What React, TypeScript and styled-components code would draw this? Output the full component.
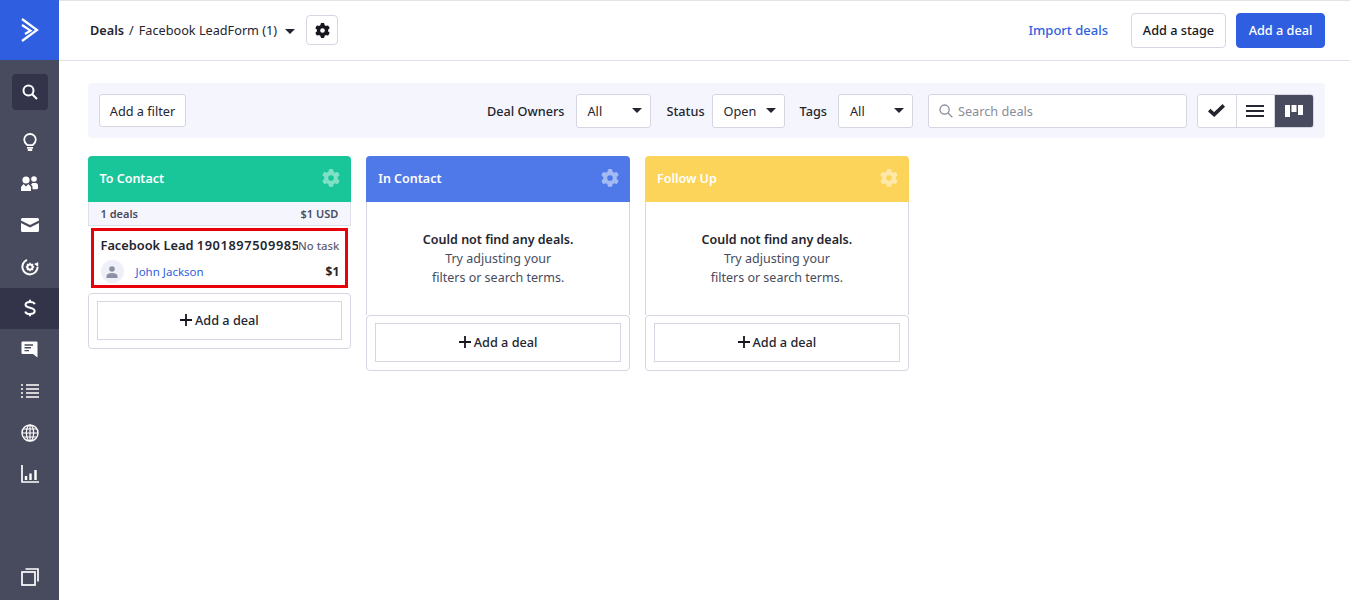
import styled, { createGlobalStyle } from 'styled-components'
import { FaGear } from 'react-icons/fa6'

const stages = [
  { name: 'To Contact', color: '#19c69a', gear: '#7fe0c6' },
  { name: 'In Contact', color: '#4f78e8', gear: '#a3baf2' },
  { name: 'Follow Up', color: '#fdd45a', gear: '#fee9ab' },
]

const LogoIcon = () => (
  <svg width="18" height="24" viewBox="0 0 18 24" fill="none" stroke="#fff" strokeWidth="2.2">
    <path d="M1 1 L16 12 L1 23" />
    <path d="M1 7 L9.5 12.6 L4 16" />
  </svg>
)
const SearchIcon = () => (
  <svg width="16" height="16" viewBox="0 0 16 16" fill="none" stroke="#fff" strokeWidth="2">
    <circle cx="6.5" cy="6.5" r="5" />
    <path d="M10.2 10.2 L15 15" />
  </svg>
)
const BulbIcon = () => (
  <svg width="14" height="18" viewBox="0 0 14 18" fill="none" stroke="#fff" strokeWidth="1.8">
    <path d="M4.5 12.2 C3 10.8 1.2 9.5 1.2 6.8 a5.8 5.8 0 0 1 11.6 0 C12.8 9.5 11 10.8 9.5 12.2 Z" />
    <path d="M4 14.8 H10 M4.8 17 H9.2" />
  </svg>
)
const ContactsIcon = () => (
  <svg width="17" height="15" viewBox="0 0 17 15" fill="#fff">
    <circle cx="5" cy="4" r="3.6" />
    <path d="M0 15 V11 L2.6 8 L5 10.6 L7.4 8 L10 11 V15 Z" />
    <circle cx="13" cy="3" r="2.8" />
    <path d="M11.5 7 H15 Q17 7 17 9.5 V12.2 Q17 13.2 15.5 13.2 H11.5 V10.5 L10 8.5 Z" />
  </svg>
)
const MailIcon = () => (
  <svg width="18" height="14" viewBox="0 0 18 14" fill="#fff">
    <path d="M1.5 0 H16.5 A1.5 1.5 0 0 1 18 1.5 V2.5 L9 7 L0 2.5 V1.5 A1.5 1.5 0 0 1 1.5 0 Z" />
    <path d="M0 5 L9 9.5 L18 5 V12.5 A1.5 1.5 0 0 1 16.5 14 H1.5 A1.5 1.5 0 0 1 0 12.5 Z" />
  </svg>
)
const AutomationIcon = () => (
  <svg width="18" height="18" viewBox="0 0 18 18" fill="none" stroke="#fff">
    <path d="M6 1.8 A7.6 7.6 0 1 0 16.6 9" strokeWidth="2" />
    <path d="M13.5 6 L17 4.5 L17 8.5 Z" fill="#fff" strokeWidth="0.5" />
    <circle cx="9" cy="9" r="2.6" strokeWidth="2" />
    <path d="M9 4.8 V6 M9 12 V13.2 M4.8 9 H6 M12 9 H13.2 M6 6 L6.9 6.9 M11.1 11.1 L12 12 M12 6 L11.1 6.9 M6.9 11.1 L6 12" strokeWidth="1.5" />
  </svg>
)
const DollarIcon = () => (
  <svg width="12" height="18" viewBox="0 0 14 20" fill="none" stroke="#fff" strokeWidth="2.4">
    <path d="M12.5 5.5 C12 3.5 10 3 7 3 C4 3 1.8 4 1.8 6.2 C1.8 11 12.4 8.5 12.4 13.6 C12.4 16 10 17 7 17 C4 17 2 16.2 1.5 14" />
    <path d="M7 0.5 V3 M7 17 V19.5" />
  </svg>
)
const ChatIcon = () => (
  <svg width="17" height="17" viewBox="0 0 17 17">
    <path d="M1.5 0.5 H15.5 A1 1 0 0 1 16.5 1.5 V16.5 L12 13 H1.5 A1 1 0 0 1 0.5 12 V1.5 A1 1 0 0 1 1.5 0.5 Z" fill="#fff" />
    <path d="M3.5 4 H12 M3.5 6.8 H10 M3.5 9.6 H8" stroke="#484b5e" strokeWidth="1.4" />
  </svg>
)
const ListIcon = () => (
  <svg width="18" height="14" viewBox="0 0 18 14" stroke="#fff" strokeWidth="1.6">
    <path d="M5 1 H18 M5 5 H18 M5 9 H18 M5 13 H18" />
    <path d="M0 1 H2 M0 5 H2 M0 9 H2 M0 13 H2" />
  </svg>
)
const GlobeIcon = () => (
  <svg width="18" height="18" viewBox="0 0 18 18" fill="none" stroke="#fff" strokeWidth="1.2">
    <circle cx="9" cy="9" r="8" strokeWidth="1.4" />
    <ellipse cx="9" cy="9" rx="3.6" ry="8" />
    <path d="M1 9 H17 M2.2 5 H15.8 M2.2 13 H15.8 M9 1 V17" />
  </svg>
)
const ChartIcon = () => (
  <svg width="18" height="18" viewBox="0 0 18 18" fill="none" stroke="#fff">
    <path d="M1 0 V17 H18" strokeWidth="1.7" />
    <path d="M5 15 V11 M9.5 15 V8.5 M14.5 15 V5" strokeWidth="2.4" />
  </svg>
)
const PagesIcon = () => (
  <svg width="18" height="18" viewBox="0 0 18 18" fill="none" stroke="#fff" strokeWidth="1.7">
    <rect x="1" y="4" width="13" height="13" />
    <path d="M4.5 1 H17 V13.5" />
  </svg>
)
const Caret = () => (
  <svg width="10" height="5" viewBox="0 0 10 5" fill="#24252f">
    <path d="M0 0 H10 L5 5 Z" />
  </svg>
)
const CheckIcon = () => (
  <svg width="17" height="13" viewBox="0 0 17 13" fill="none" stroke="#24252f" strokeWidth="3.6">
    <path d="M1.2 6.2 L6.2 10.6 L15.8 1.4" />
  </svg>
)
const ListViewIcon = () => (
  <svg width="18" height="12" viewBox="0 0 18 12" stroke="#24252f" strokeWidth="2">
    <path d="M0 1 H18 M0 6 H18 M0 11 H18" />
  </svg>
)
const BoardViewIcon = () => (
  <svg width="18" height="12" viewBox="0 0 18 12" fill="#fff">
    <rect x="0" y="0" width="5" height="12" />
    <rect x="6.5" y="0" width="5" height="7" />
    <rect x="13" y="0" width="5" height="10" />
  </svg>
)
const InputSearchIcon = () => (
  <svg width="14" height="14" viewBox="0 0 14 14" fill="none" stroke="#8a8c99" strokeWidth="1.3">
    <circle cx="5.6" cy="5.6" r="4.6" />
    <path d="M9 9 L13.4 13.4" />
  </svg>
)
const PersonIcon = () => (
  <svg width="12" height="12" viewBox="0 0 12 12" fill="#8d90a3">
    <circle cx="6" cy="3" r="2.8" />
    <path d="M0.5 12 V10 C0.5 8 3 7 6 7 C9 7 11.5 8 11.5 10 V12 Z" />
  </svg>
)
const PlusIcon = () => (
  <svg width="12" height="12" viewBox="0 0 12 12" stroke="#17181f" strokeWidth="1.8">
    <path d="M6 0 V12 M0 6 H12" />
  </svg>
)

function App() {
  return (
    <Page>
      <GlobalStyle />
      <Sidebar>
        <Logo><LogoIcon /></Logo>
        <SearchSlot><SearchBox><SearchIcon /></SearchBox></SearchSlot>
        <NavItem><BulbIcon /></NavItem>
        <NavItem><ContactsIcon /></NavItem>
        <NavItem><MailIcon /></NavItem>
        <NavItem><AutomationIcon /></NavItem>
        <NavItem $active><DollarIcon /></NavItem>
        <NavItem><ChatIcon /></NavItem>
        <NavItem><ListIcon /></NavItem>
        <NavItem><GlobeIcon /></NavItem>
        <NavItem><ChartIcon /></NavItem>
        <NavBottom><PagesIcon /></NavBottom>
      </Sidebar>
      <Main>
        <Header>
          <Crumbs>
            <b>Deals</b>
            <Slash>/</Slash>
            <span>Facebook LeadForm (1)</span>
            <CaretWrap><Caret /></CaretWrap>
          </Crumbs>
          <GearButton><FaGear size={15} color="#17181f" /></GearButton>
          <HeaderRight>
            <ImportLink>Import deals</ImportLink>
            <StageButton>Add a stage</StageButton>
            <PrimaryButton>Add a deal</PrimaryButton>
          </HeaderRight>
        </Header>
        <Content>
          <FilterBar>
            <FilterButton>Add a filter</FilterButton>
            <FilterRight>
              <FilterLabel>Deal Owners</FilterLabel>
              <Select $w={75}>All<Caret /></Select>
              <FilterLabel $left={16} $right={7}>Status</FilterLabel>
              <Select $w={73}>Open<Caret /></Select>
              <FilterLabel $left={15}>Tags</FilterLabel>
              <Select $w={75}>All<Caret /></Select>
              <SearchInput><InputSearchIcon /><span>Search deals</span></SearchInput>
              <ViewGroup>
                <ViewButton $w={37.5}><CheckIcon /></ViewButton>
                <ViewButton $w={38.5}><ListViewIcon /></ViewButton>
                <ViewButton $w={39} $active><BoardViewIcon /></ViewButton>
              </ViewGroup>
            </FilterRight>
          </FilterBar>
          <Board>
            {stages.map((stage, i) => (
              <Column key={stage.name}>
                <StageHeader $color={stage.color}>
                  <span>{stage.name}</span>
                  <FaGear size={18} color={stage.gear} />
                </StageHeader>
                {i === 0 ? (
                  <>
                    <Summary><span>1 deals</span><span>$1 USD</span></Summary>
                    <Card>
                      <CardTop>
                        <DealTitle>Facebook Lead <Digits>1901897509985975</Digits></DealTitle>
                        <TaskLabel>No task</TaskLabel>
                      </CardTop>
                      <CardBottom>
                        <Avatar><PersonIcon /></Avatar>
                        <ContactName>John Jackson</ContactName>
                        <DealValue>$1</DealValue>
                      </CardBottom>
                    </Card>
                  </>
                ) : (
                  <Empty>
                    <b>Could not find any deals.</b>
                    <span>Try adjusting your</span>
                    <span>filters or search terms.</span>
                  </Empty>
                )}
                <AddArea>
                  <AddButton><PlusIcon />Add a deal</AddButton>
                </AddArea>
              </Column>
            ))}
          </Board>
        </Content>
      </Main>
    </Page>
  )
}

const GlobalStyle = createGlobalStyle`
  html, body { margin: 0; padding: 0; background: #fff; }
  * { box-sizing: border-box; }
  body { font-family: "Noto Sans", "Open Sans", sans-serif; color: #17181f; }
`
const Page = styled.div`
  display: flex;
  width: 1350px;
  height: 600px;
  overflow: hidden;
  font-size: 12.7px;
`
const Sidebar = styled.nav`
  width: 59px;
  flex: none;
  background: #484b5e;
  display: flex;
  flex-direction: column;
`
const Logo = styled.div`
  height: 60px;
  background: #2f5fe0;
  display: flex;
  align-items: center;
  justify-content: center;
`
const SearchSlot = styled.div`
  height: 61.5px;
  padding-top: 14px;
  display: flex;
  align-items: flex-start;
  justify-content: center;
`
const SearchBox = styled.div`
  width: 36px;
  height: 36px;
  border-radius: 4px;
  background: #33344a;
  display: flex;
  align-items: center;
  justify-content: center;
`
const NavItem = styled.div<{ $active?: boolean }>`
  height: 41.5px;
  flex: none;
  display: flex;
  align-items: center;
  justify-content: center;
  background: ${p => (p.$active ? '#33344a' : 'transparent')};
`
const NavBottom = styled(NavItem)`
  margin-top: auto;
  margin-bottom: 2px;
`
const Main = styled.div`
  flex: 1;
  min-width: 0;
  display: flex;
  flex-direction: column;
`
const Header = styled.header`
  height: 61px;
  flex: none;
  display: flex;
  align-items: center;
  padding: 0 25px 1px 31px;
  border-top: 1px solid #e3e3e6;
  border-bottom: 1px solid #dfe0ea;
`
const Crumbs = styled.div`
  display: flex;
  align-items: center;
  color: #24252f;
  b { font-weight: 600; }
`
const Slash = styled.span`
  margin: 0 5px;
`
const CaretWrap = styled.span`
  display: flex;
  margin-left: 8px;
  padding-top: 2px;
`
const GearButton = styled.div`
  width: 32px;
  height: 30px;
  margin-left: 11px;
  border: 1px solid #d5d6e2;
  border-radius: 4px;
  display: flex;
  align-items: center;
  justify-content: center;
`
const HeaderRight = styled.div`
  margin-left: auto;
  display: flex;
  align-items: center;
`
const ImportLink = styled.span`
  color: #2f5fe0;
  font-size: 13px;
  font-weight: 500;
  margin-right: 23px;
`
const StageButton = styled.div`
  width: 95px;
  height: 35px;
  border: 1px solid #d5d6e2;
  border-radius: 4px;
  font-weight: 500;
  display: flex;
  align-items: center;
  justify-content: center;
`
const PrimaryButton = styled(StageButton)`
  width: 89px;
  margin-left: 10px;
  background: #2f5fe0;
  border-color: #2f5fe0;
  color: #fff;
`
const Content = styled.main`
  flex: 1;
  padding: 22px 25px 0 28.5px;
`
const FilterBar = styled.div`
  height: 55px;
  padding: 0 11px 0 11.5px;
  background: #f5f6fd;
  border-radius: 4px;
  display: flex;
  align-items: center;
  justify-content: space-between;
`
const FilterButton = styled.div`
  width: 87px;
  height: 33px;
  background: #fff;
  border: 1px solid #d5d6e2;
  border-radius: 3px;
  color: #24252f;
  display: flex;
  align-items: center;
  justify-content: center;
`
const FilterRight = styled.div`
  display: flex;
  align-items: center;
`
const FilterLabel = styled.span<{ $left?: number; $right?: number }>`
  margin-left: ${p => p.$left ?? 0}px;
  margin-right: ${p => p.$right ?? 11}px;
  font-weight: 500;
  color: #24252f;
  white-space: nowrap;
`
const Select = styled.div<{ $w: number }>`
  width: ${p => p.$w}px;
  height: 34px;
  padding: 0 8px 0 11px;
  background: #fff;
  border: 1px solid #d5d6e2;
  border-radius: 3px;
  color: #24252f;
  display: flex;
  align-items: center;
  justify-content: space-between;
`
const SearchInput = styled.div`
  width: 259px;
  height: 34px;
  margin-left: 15px;
  padding-left: 10px;
  background: #fff;
  border: 1px solid #d5d6e2;
  border-radius: 3px;
  color: #8a8c99;
  display: flex;
  align-items: center;
  gap: 5px;
`
const ViewGroup = styled.div`
  display: flex;
  height: 34px;
  margin-left: 10px;
  border: 1px solid #d5d6e2;
  border-radius: 3px;
  background: #fff;
  overflow: hidden;
`
const ViewButton = styled.div<{ $active?: boolean; $w: number }>`
  width: ${p => p.$w}px;
  display: flex;
  align-items: center;
  justify-content: center;
  background: ${p => (p.$active ? '#484b5e' : '#fff')};
  & + & { border-left: 1px solid #d5d6e2; }
`
const Board = styled.div`
  display: flex;
  align-items: flex-start;
  gap: 15px;
  margin-top: 18px;
`
const Column = styled.section`
  width: 263.75px;
`
const StageHeader = styled.div<{ $color: string }>`
  height: 46px;
  padding: 0 11px 2px 12px;
  background: ${p => p.$color};
  border-radius: 4px 4px 0 0;
  color: #fff;
  font-size: 12.5px;
  font-weight: 600;
  display: flex;
  align-items: center;
  justify-content: space-between;
`
const Summary = styled.div`
  height: 24px;
  padding: 0 12px;
  background: #f5f6fd;
  border: 1px solid #dfe0ea;
  border-width: 0 1px 1px;
  color: #484b5e;
  font-size: 11px;
  font-weight: 600;
  display: flex;
  align-items: center;
  justify-content: space-between;
`
const Card = styled.div`
  height: 60px;
  margin: 2px 3px 5px;
  padding: 8px 9px 0 10px;
  outline: 3px solid #e8000b;
  outline-offset: -3px;
  display: flex;
  flex-direction: column;
  gap: 6px;
`
const CardTop = styled.div`
  display: flex;
  align-items: center;
`
const DealTitle = styled.span`
  flex: 1;
  min-width: 0;
  overflow: hidden;
  white-space: nowrap;
  font-size: 12.8px;
  font-weight: 600;
  color: #24252f;
`
const Digits = styled.span`
  letter-spacing: 0.6px;
`
const TaskLabel = styled.span`
  flex: none;
  color: #5f6172;
  font-size: 11.3px;
  font-weight: 500;
`
const CardBottom = styled.div`
  display: flex;
  align-items: center;
`
const Avatar = styled.div`
  width: 23px;
  height: 23px;
  border-radius: 50%;
  background: #eeeff7;
  display: flex;
  align-items: center;
  justify-content: center;
`
const ContactName = styled.span`
  margin-left: 12px;
  color: #2f5fe0;
  font-size: 11.5px;
`
const DealValue = styled.span`
  margin-left: auto;
  font-size: 12px;
  font-weight: 700;
  color: #24252f;
`
const Empty = styled.div`
  height: 113px;
  padding-top: 28px;
  border: 1px solid #d5d6e2;
  border-width: 0 1px;
  color: #484b5e;
  font-size: 12.5px;
  line-height: 19px;
  text-align: center;
  display: flex;
  flex-direction: column;
  b { font-weight: 600; color: #24252f; }
`
const AddArea = styled.div`
  height: 56px;
  padding: 7px 8px 0;
  border: 1px solid #d5d6e2;
  border-radius: 4px;
`
const AddButton = styled.div`
  height: 39px;
  padding-bottom: 1px;
  border: 1px solid #d5d6e2;
  color: #24252f;
  font-weight: 500;
  display: flex;
  align-items: center;
  justify-content: center;
  gap: 3px;
`
export default App
